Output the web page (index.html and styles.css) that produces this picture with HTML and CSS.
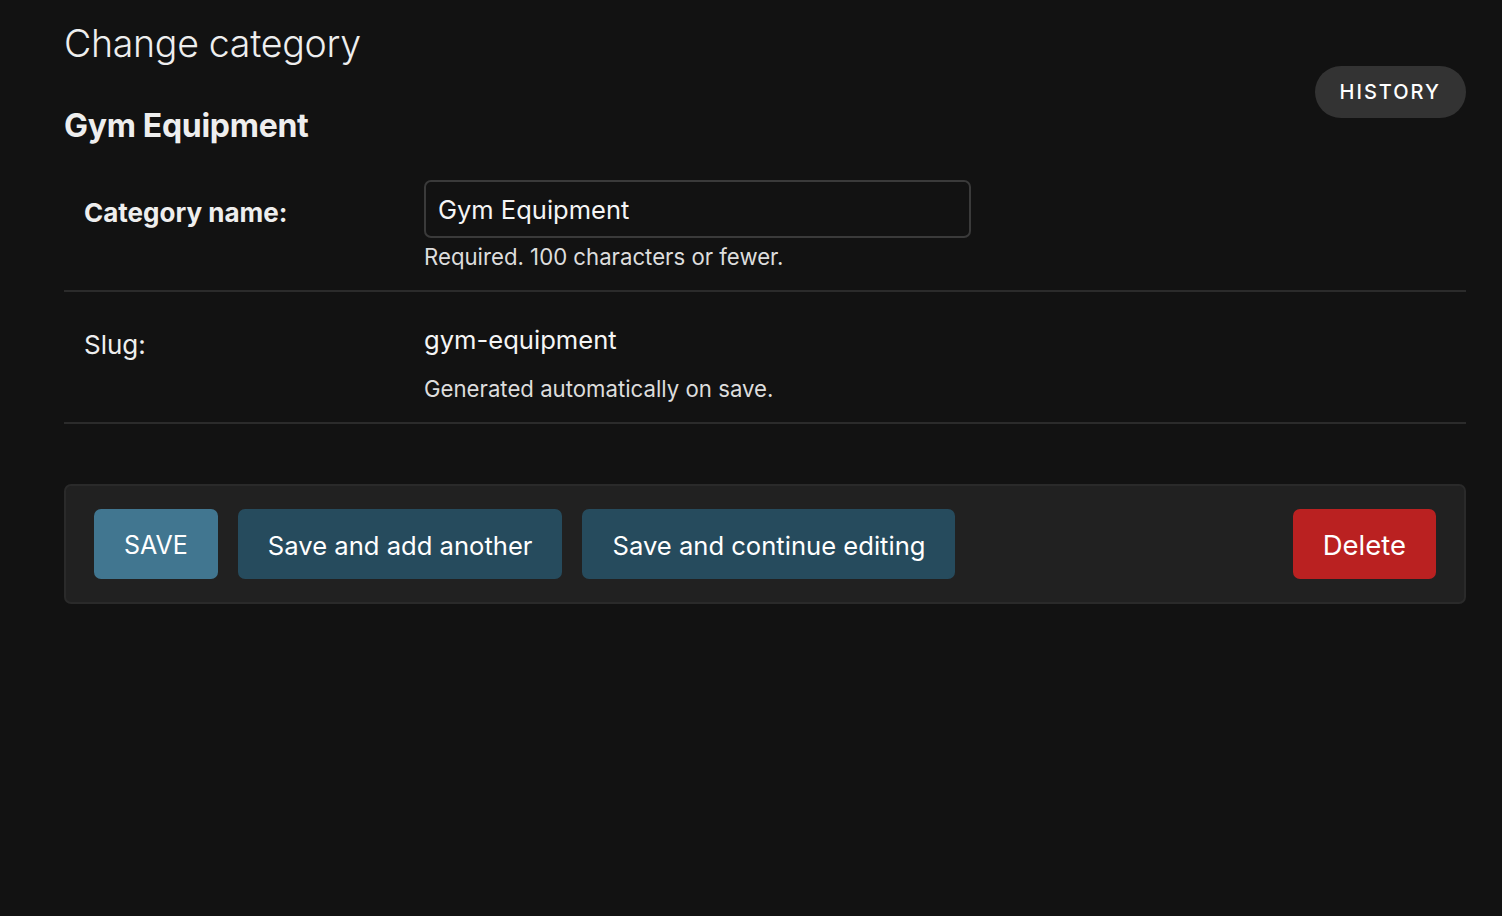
FILE: index.html
```html
<!DOCTYPE html>
<html lang="en">
<head>
<meta charset="utf-8">
<title>Change category</title>
<link rel="stylesheet" href="styles.css">
</head>
<body>
<main class="content">
  <h1 class="title">Change category</h1>
  <div class="header-row">
    <h2 class="subtitle">Gym Equipment</h2>
    <a class="history" href="#">HISTORY</a>
  </div>
  <form class="form">
    <div class="row">
      <label class="label required" for="id_name">Category name:</label>
      <div class="field">
        <input class="input" id="id_name" type="text" value="Gym Equipment">
        <div class="help help-first">Required. 100 characters or fewer.</div>
      </div>
    </div>
    <div class="row row-slug">
      <div class="label">Slug:</div>
      <div class="field">
        <div class="readonly">gym-equipment</div>
        <div class="help help-second">Generated automatically on save.</div>
      </div>
    </div>
    <div class="submit-row">
      <button type="button" class="btn btn-default">SAVE</button>
      <button type="button" class="btn">Save and add another</button>
      <button type="button" class="btn">Save and continue editing</button>
      <span class="spacer"></span>
      <a class="btn btn-delete" href="#">Delete</a>
    </div>
  </form>
</main>
</body>
</html>
```
FILE: styles.css
```css
html, body {
  margin: 0;
  padding: 0;
  background: #121212;
  color: #f5f5f5;
  font-family: Inter, "Noto Sans", sans-serif;
}
.content {
  padding: 18px 36px 0 64px;
}
.title {
  margin: 0;
  font-size: 37.5px;
  font-weight: 300;
  line-height: 52px;
  color: #eeeeee;
  letter-spacing: -0.3px;
}
.header-row {
  display: flex;
  align-items: flex-start;
  justify-content: space-between;
}
.subtitle {
  margin: 38px 0 0 0;
  font-size: 32px;
  font-weight: 700;
  line-height: 36px;
  color: #eeeeee;
  letter-spacing: -0.3px;
}
.history {
  display: inline-flex;
  align-items: center;
  height: 52px;
  padding: 0 25px;
  margin-top: -4px;
  border-radius: 26px;
  background: #333333;
  color: #ffffff;
  font-size: 20px;
  font-weight: 500;
  letter-spacing: 2px;
  text-decoration: none;
}
.form {
  margin-top: 26px;
}
.row {
  display: flex;
  border-bottom: 2px solid #2b2b2b;
  padding: 10px 0 20px 20px;
}
.row-slug {
  padding-top: 30px;
  padding-bottom: 19px;
}
.label {
  width: 340px;
  flex: none;
  font-size: 26px;
  line-height: 40px;
  padding-top: 3px;
  color: #eeeeee;
}
.label.required {
  font-weight: 700;
  padding-top: 13px;
}
.field {
  display: flex;
  flex-direction: column;
}
.input {
  box-sizing: border-box;
  width: 547px;
  height: 58px;
  padding: 1px 12px 0;
  background: #121212;
  border: 2px solid #3a3a3a;
  border-radius: 7px;
  color: #f5f5f5;
  font-family: inherit;
  font-size: 25.5px;
}
.readonly {
  font-size: 25.6px;
  line-height: 36px;
  color: #f5f5f5;
}
.help {
  font-size: 22.2px;
  line-height: 28px;
  color: #dddddd;
}
.help-first {
  margin-top: 4px;
  padding-top: 1px;
  margin-bottom: -1px;
}
.help-second {
  margin-top: 17px;
}
.submit-row {
  display: flex;
  align-items: center;
  gap: 20px;
  margin-top: 60px;
  padding: 23px 28px;
  background: #212121;
  border: 2px solid #2a2a2a;
  border-radius: 7px;
}
.spacer {
  flex: 1;
}
.btn {
  display: inline-flex;
  align-items: center;
  justify-content: center;
  height: 70px;
  padding: 2px 30px 0;
  border: none;
  border-radius: 7px;
  background: #264b5d;
  color: #ffffff;
  font-family: inherit;
  font-size: 25.6px;
  text-decoration: none;
  box-sizing: border-box;
}
.btn-default {
  background: #417690;
  font-size: 25px;
}
.btn-delete {
  background: #ba2121;
  font-size: 27.5px;
}
```
